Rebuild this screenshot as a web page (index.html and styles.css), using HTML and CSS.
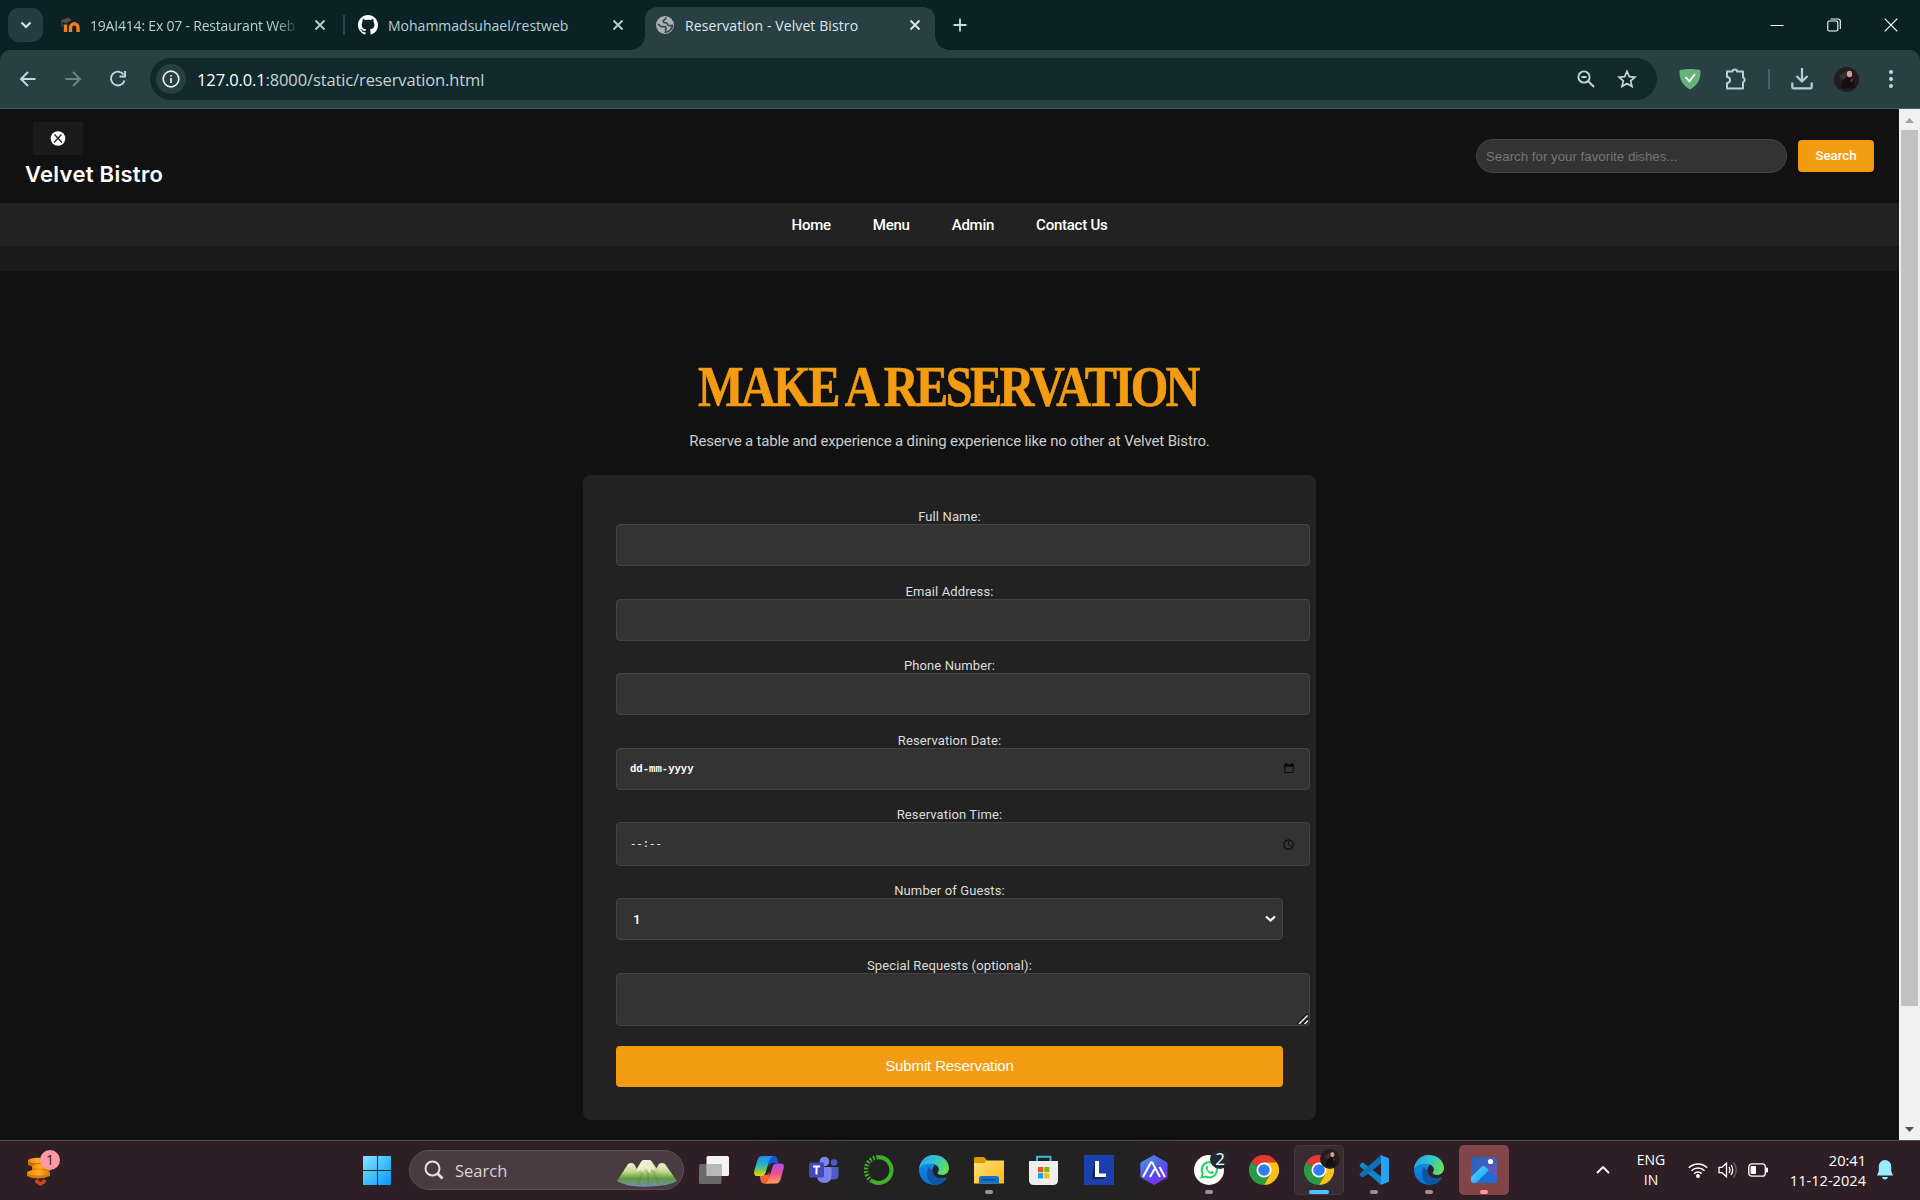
FILE: index.html
```html
<!DOCTYPE html>
<html lang="en">
<head>
<meta charset="utf-8">
<title>Reservation - Velvet Bistro</title>
<link rel="stylesheet" href="styles.css">
</head>
<body>
<svg class="defs" width="0" height="0">
  <defs>
    <linearGradient id="win" x1="0" y1="0" x2="1" y2="1"><stop offset="0" stop-color="#8be0ff"/><stop offset=".5" stop-color="#3ec3fb"/><stop offset="1" stop-color="#0b93f8"/></linearGradient>
    <linearGradient id="hill" x1="0" y1="0" x2="0" y2="1"><stop offset="0" stop-color="#f4f3dc"/><stop offset=".4" stop-color="#c3d68c"/><stop offset=".7" stop-color="#5d9a3b"/><stop offset="1" stop-color="#7790c0"/></linearGradient>
    <linearGradient id="cpa" x1="0" y1="0" x2="0" y2="1"><stop offset="0" stop-color="#1c8df0"/><stop offset=".45" stop-color="#27b5c4"/><stop offset=".75" stop-color="#86c94a"/><stop offset="1" stop-color="#f5d30b"/></linearGradient>
    <linearGradient id="cpb" x1="0" y1="0" x2="0" y2="1"><stop offset="0" stop-color="#a94df0"/><stop offset=".5" stop-color="#ef4f8f"/><stop offset="1" stop-color="#ffa05a"/></linearGradient>
    <linearGradient id="edgeTop" x1="0" y1=".3" x2="1" y2=".6"><stop offset="0" stop-color="#2aa5e8"/><stop offset=".5" stop-color="#2fc6cf"/><stop offset="1" stop-color="#6be04f"/></linearGradient>
    <linearGradient id="edgeLow" x1="0" y1="0" x2="0" y2="1"><stop offset="0" stop-color="#1592e6"/><stop offset="1" stop-color="#0b6fd0"/></linearGradient>
    <linearGradient id="fold" x1="0" y1="0" x2="1" y2="1"><stop offset="0" stop-color="#ffe07c"/><stop offset="1" stop-color="#fcb814"/></linearGradient>
    <linearGradient id="hex" x1="0" y1="0" x2=".6" y2="1"><stop offset="0" stop-color="#4aa3ea"/><stop offset=".55" stop-color="#5058e8"/><stop offset="1" stop-color="#7a2df0"/></linearGradient>
    <linearGradient id="pic" x1="0" y1="0" x2="1" y2="1"><stop offset="0" stop-color="#1668c6"/><stop offset="1" stop-color="#8050a8"/></linearGradient>
    <linearGradient id="pic2" x1="0" y1="0" x2="1" y2="1"><stop offset="0" stop-color="#55dcff"/><stop offset="1" stop-color="#1598e8"/></linearGradient>
    <linearGradient id="coin" x1="0" y1="0" x2="1" y2="0"><stop offset="0" stop-color="#ef8a12"/><stop offset=".5" stop-color="#ffae22"/><stop offset="1" stop-color="#d97506"/></linearGradient>
    <symbol id="close" viewBox="0 0 12 12"><path d="M1.5 1.5l9 9M10.5 1.5l-9 9" fill="none" stroke="currentColor" stroke-width="1.8"/></symbol>
    <symbol id="edge" viewBox="0 0 30 30">
      <path d="M15 0a15 15 0 0 0-15 15a15 15 0 0 0 15 15c5 0 9-2 12.300-6.200c.3-.8-.3-1.300-1-1c-6 2.200-13-.6-13-7.300c0-2 .8-3.500 2-4.500z" fill="url(#edgeLow)"/>
      <path d="M9.500 12c-3 6.500-1.500 14 5.500 18c5 0 9.500-2.500 12.500-6.500c.3-.8-.4-1.200-1-1c-6 2.200-13.200-.6-13.200-7z" fill="#0e55a4"/>
      <path d="M0 14.500C.5 6 7 0 15 0c8.500 0 15 6 15 13c0 4.500-3.500 7-7 7c-3.500 0-5.200-1.400-4-2.900c2.500-3.300-.5-7.600-5.500-8.300C7.500 8 1.500 10 0 14.500z" fill="url(#edgeTop)"/>
    </symbol>
    <symbol id="chrome" viewBox="0 0 30 30">
      <path d="M15 15L2 7.500A15 15 0 0 1 28 7.500z" fill="#e33b2e"/>
      <path d="M15 15l6.500 3.750L15 30A15 15 0 0 1 2 7.500z" fill="#2a9a47"/>
      <path d="M15 7.500h13A15 15 0 0 1 15 30l6.500-11.250z" fill="#fbc116"/>
      <circle cx="15" cy="15" r="7.500" fill="#fff"/><circle cx="15" cy="15" r="5.800" fill="#2f7cf0"/>
    </symbol>
    <symbol id="portrait" viewBox="0 0 25 25">
      <circle cx="12.500" cy="12.500" r="12.500" fill="#241c1d"/>
      <path d="M7 22l2-9 4-4 6 3 2 9z" fill="#121012"/><path d="M5 9l8-5 1 5-5 4z" fill="#3a3033"/>
      <ellipse cx="15.500" cy="7" rx="2.600" ry="3.200" fill="#d0a28e"/><path d="M16 13l3-2-1 5z" fill="#992018"/>
    </symbol>
  </defs>
</svg>

<header class="browser">
  <div class="tabstrip">
    <div class="tabsearch"><svg width="12" height="12" viewBox="0 0 12 12"><path d="M1.500 3.500L6 8l4.500-4.500" fill="none" stroke="#dbe6e8" stroke-width="2"/></svg></div>
    <div class="tab tab-first">
      <svg class="favicon" width="20" height="20" viewBox="0 0 20 20"><path d="M4.500 17V9.500M9.500 17v-4.500a3.600 3.600 0 0 1 7.500 0V17" fill="none" stroke="#ef7f1a" stroke-width="3.400"/><path d="M0 6l7-3 3 2-5 3zM1 6v6" fill="#55504d" stroke="#55504d"/></svg>
      <span class="tab-title faded t1">19AI414: Ex 07 - Restaurant Web</span>
      <svg class="x" width="12" height="12"><use href="#close"/></svg>
    </div>
    <i class="tab-sep"></i>
    <div class="tab tab-second">
      <svg class="favicon" width="20" height="20" viewBox="0 0 16 16"><path fill="#fff" d="M8 0C3.580 0 0 3.580 0 8c0 3.540 2.290 6.530 5.470 7.590.4.070.55-.17.55-.38 0-.19-.01-.82-.01-1.490-2.010.37-2.530-.49-2.690-.94-.09-.23-.48-.94-.82-1.130-.28-.15-.68-.52-.01-.53.63-.01 1.080.58 1.230.82.72 1.210 1.870.87 2.330.66.07-.52.28-.87.51-1.070-1.780-.2-3.640-.89-3.640-3.950 0-.87.31-1.590.82-2.150-.08-.2-.36-1.020.08-2.120 0 0 .67-.21 2.200.82.64-.18 1.320-.27 2-.27s1.360.09 2 .27c1.530-1.040 2.200-.82 2.200-.82.44 1.100.16 1.920.08 2.120.51.56.82 1.270.82 2.150 0 3.070-1.870 3.750-3.650 3.950.29.25.54.73.54 1.480 0 1.070-.01 1.930-.01 2.200 0 .21.15.46.55.38A8.010 8.010 0 0 0 16 8c0-4.420-3.580-8-8-8z"/></svg>
      <span class="tab-title t2">Mohammadsuhael/restweb</span>
      <svg class="x" width="12" height="12"><use href="#close"/></svg>
    </div>
    <div class="tab tab-active">
      <svg class="favicon" width="18" height="18" viewBox="0 0 18 18"><circle cx="9" cy="9" r="9" fill="#a9b0b8"/><path d="M10.500 1.800C9 2 9.500 3.800 8.200 4.200C6.800 4.500 7 6 8 6.500c1.500.5 3.500 0 3.500 2c0 1.200 1.500 1 2.500 1.200c1.200.2 2 .3 2.300-1c.2 3.700-2.600 7.300-6.800 7.500c.5-1.700-.5-2.200.3-3.200c.8-1-.2-2.300-1.600-2.300H5.500C4 10.700 4 8.500 1.700 8.300" fill="none" stroke="#35484e" stroke-width="1.700"/></svg>
      <span class="tab-title t3">Reservation - Velvet Bistro</span>
      <svg class="x" width="12" height="12"><use href="#close"/></svg>
    </div>
    <svg class="newtab" width="14" height="14" viewBox="0 0 14 14"><path d="M7 .5v13M.5 7h13" stroke="#c5dade" stroke-width="1.800"/></svg>
    <div class="wincontrols">
      <svg width="14" height="14" viewBox="0 0 14 14"><path d="M.5 7.500h13" stroke="#fff"/></svg>
      <svg width="14" height="14" viewBox="0 0 14 14" fill="none" stroke="#fff" stroke-width="1.100"><rect x=".8" y="3" width="10" height="10" rx="1.500"/><path d="M3.500 1h7.500a2.300 2.300 0 0 1 2.300 2.300V11"/></svg>
      <svg width="14" height="14" viewBox="0 0 14 14"><path d="M.7.700l12.600 12.600M13.300.700L.7 13.300" stroke="#fff" stroke-width="1.200"/></svg>
    </div>
  </div>
  <div class="toolbar">
    <svg class="nav-ic" width="20" height="20" viewBox="0 0 20 20" fill="none" stroke="#c3d9df" stroke-width="1.900"><path d="M17.500 10H3.500M10 3l-7 7 7 7"/></svg>
    <svg class="nav-ic" width="20" height="20" viewBox="0 0 20 20" fill="none" stroke="#6d8488" stroke-width="1.900"><path d="M2.500 10h14M10 3l7 7-7 7"/></svg>
    <svg class="nav-ic" width="20" height="20" viewBox="0 0 20 20" fill="none" stroke="#c3d9df" stroke-width="1.900"><path d="M16.500 11.500A6.900 6.900 0 1 1 15.500 5.500M17 2v5.500h-5.500"/></svg>
    <div class="omnibox">
      <div class="info"><svg width="18" height="18" viewBox="0 0 18 18" fill="none" stroke="#e8eef0" stroke-width="1.700"><circle cx="9" cy="9" r="7.800"/><path d="M9 8v5M9 5v1.600"/></svg></div>
      <span class="url"><b>127.0.0.1</b>:8000/static/reservation.html</span>
      <svg class="zoom" width="18" height="18" viewBox="0 0 18 18" fill="none" stroke="#c9d3d5" stroke-width="1.900"><circle cx="7" cy="7" r="5.600"/><path d="M11 11l6 6M4.500 7h5"/></svg>
      <svg width="20" height="20" viewBox="0 0 20 20" fill="none" stroke="#c9d3d5" stroke-width="1.700"><path d="M10 2.300l2.300 5.300 5.700.5-4.300 3.800 1.300 5.700-5-3-5 3 1.300-5.700L2 8.100l5.700-.5z"/></svg>
    </div>
    <svg class="shield" width="22" height="22" viewBox="0 0 22 22"><path d="M.5 2.500C4 .5 18 .5 21.500 2.500c.3 9-3 15-10.500 19C3.500 17.500.2 11.500.5 2.500z" fill="#67b279"/><path d="M6.500 9l4 4.300L16 6" fill="none" stroke="#fff" stroke-width="1.800"/></svg>
    <svg class="puzzle" width="22" height="22" viewBox="0 0 22 22" fill="none" stroke="#b5d0d7" stroke-width="2" stroke-linejoin="round"><path d="M2 3.500h5.500a2.300 2 0 0 1 4.600 0H18v6a2.400 2.400 0 0 1 0 4.600V20.500H2V15a3 3 0 0 0 0-6z"/></svg>
    <i class="bar-sep"></i>
    <svg class="download" width="22" height="22" viewBox="0 0 22 22" fill="none" stroke="#b5d0d7" stroke-width="2.200"><path d="M11 0v13M5.500 8l5.500 5.500L16.500 8M1.300 14.500v4.800q0 1 1 1h17.400q1 0 1-1v-4.800"/></svg>
    <svg class="avatar" width="25" height="25"><use href="#portrait"/></svg>
    <svg width="6" height="20" viewBox="0 0 6 20" fill="#c3d9df"><circle cx="3" cy="3" r="2"/><circle cx="3" cy="10" r="2"/><circle cx="3" cy="17" r="2"/></svg>
  </div>
</header>

<div class="viewport">
  <div class="page">
    <div class="site-header">
      <div class="brand">
        <svg width="50" height="33" viewBox="0 0 50 33"><rect width="50" height="33" fill="#1a1a1a"/><circle cx="25" cy="16.500" r="7.300" fill="#fff"/><path d="M21.500 12.500l7.500 8M28.500 12.500l-7.500 8" stroke="#222" stroke-width="1.300"/></svg>
        <span class="brand-name">Velvet Bistro</span>
      </div>
      <div class="search">
        <div class="search-input"><span>Search for your favorite dishes...</span></div>
        <div class="search-btn"><span>Search</span></div>
      </div>
    </div>
    <nav class="site-nav"><a>Home</a><a>Menu</a><a>Admin</a><a>Contact Us</a></nav>
    <div class="strip"></div>
    <main class="main">
      <h1><span>MAKE A RESERVATION</span></h1>
      <p class="lead">Reserve a table and experience a dining experience like no other at Velvet Bistro.</p>
      <div class="card">
        <label>Full Name:</label>
        <div class="field"></div>
        <label>Email Address:</label>
        <div class="field email"></div>
        <label>Phone Number:</label>
        <div class="field"></div>
        <label>Reservation Date:</label>
        <div class="field mono"><span>dd-mm-yyyy</span>
          <svg class="cal" width="10" height="11" viewBox="0 0 10 11"><path d="M.8 2.500h8.400v7H.8z" fill="none" stroke="#0c0c0c" stroke-width="1.100"/><path d="M.2 1.200h9.600v2.200H.2zM1.500 0h1.500v2H1.500zM7 0h1.500v2H7z" fill="#050505"/></svg></div>
        <label>Reservation Time:</label>
        <div class="field mono time"><span>--:--</span>
          <svg width="11" height="11" viewBox="0 0 11 11" fill="none" stroke="#0c0c0c"><circle cx="5.500" cy="5.500" r="4.700" stroke-width="1.200"/><path d="M5.500 2.500v3l2 2"/></svg></div>
        <label>Number of Guests:</label>
        <div class="field select"><span>1</span>
          <svg width="11" height="8" viewBox="0 0 11 8"><path d="M1 1.500l4.500 4 4.500-4" fill="none" stroke="#fff" stroke-width="2.200"/></svg></div>
        <label>Special Requests (optional):</label>
        <div class="field area"><svg width="11" height="11" viewBox="0 0 11 11"><path d="M0 11L10 1M5.500 11L11 5.500" stroke="#111" stroke-width="1.500"/><path d="M2 11l8.500-8.500M7.500 11L11 7.500" stroke="#e8e8e8" stroke-width="1.500"/></svg></div>
        <div class="submit">Submit Reservation</div>
      </div>
    </main>
  </div>
  <div class="scrollbar">
    <svg width="9" height="5"><path d="M0 5L4.500 0 9 5z" fill="#a3a3a3"/></svg>
    <i class="thumb"></i>
    <svg width="9" height="5"><path d="M0 0l4.500 5L9 0z" fill="#505050"/></svg>
  </div>
</div>

<footer class="taskbar">
  <div class="widget">
    <svg width="34" height="40" viewBox="0 0 34 40">
      <path d="M1 11v5q7 4 17 1v-6z" fill="#c96a06"/><ellipse cx="11" cy="11.500" rx="10" ry="2.800" fill="url(#coin)"/>
      <path d="M5 17v4q8 4 18 1v-5z" fill="#d97807"/><ellipse cx="14" cy="17.500" rx="9" ry="2.500" fill="url(#coin)"/>
      <path d="M0 23v4q10 5 23 0v-4z" fill="#dd7a06"/><ellipse cx="11.500" cy="23.500" rx="11.500" ry="3" fill="url(#coin)"/>
      <path d="M8 31.500l2.500-1.500 3 3 3-3 2.500 1.500v2L13.500 37 8 33.500z" fill="#cc4716"/>
    </svg>
    <span class="badge">1</span>
  </div>
  <svg class="start" width="30" height="30" viewBox="0 0 30 30" fill="url(#win)"><path d="M1.500 1H15v14H1v-13.500zM16 1h12.500l.500.500V15H16zM1 16h14v14H1.500L1 29.500zM16 16h13v13.500l-.5.500H16z"/></svg>
  <div class="task-search">
    <svg width="20" height="20" viewBox="0 0 20 20" fill="none" stroke="#e6e1e3" stroke-width="2"><circle cx="8.500" cy="8.500" r="7"/><path d="M13.500 13.500l5 5" stroke-width="2.600"/></svg>
    <span>Search</span>
    <svg class="hills" width="60" height="28" viewBox="0 0 60 28">
      <path d="M0 22L11 5q3-2 6 0l12 20Q12 29 0 22z" fill="url(#hill)"/><path d="M60 22L48 5q-3-2-6 0L30 25q18 4 30-3z" fill="url(#hill)"/>
      <path d="M9 26L24 3l2-2h7l2 2 16 22q-20 5-42 1z" fill="url(#hill)"/>
      <path d="M29 2l-8 24M31 2v25M33 4l9 22" stroke="#55745a" stroke-width="2" opacity=".3"/>
      <path d="M24 3l2-2h7l2 2 3 9-4-2-2 4-3-5-4 5-1-4-5 4z" fill="#f5f2dc" opacity=".8"/>
    </svg>
  </div>
  <div class="apps">
    <div class="app"><svg width="30" height="30" viewBox="0 0 30 30"><rect x="7.500" y="1" width="22.500" height="20" rx="1.500" fill="#f4f4f4"/><rect x="0" y="9" width="22.500" height="20" rx="1.500" fill="#777" opacity=".85"/><rect x="7.500" y="9" width="15" height="12" fill="#b9b9b9"/></svg></div>
    <div class="app"><svg width="30" height="30" viewBox="0 0 30 30"><path d="M14 1h6q2.500 0 3.300 2.500L24.500 8H19q-3 0-4 4z" fill="#1a55d8"/><path d="M16 28.500H10q-2.500 0-3.300-2.500L5.500 20H12q2.500 0 3.500-3z" fill="#f2603a"/><path d="M8 1h11.500Q16 2 14.500 8L11.500 18q-.8 3-4 3H3.500Q-1 21 .5 15L3.500 5Q4.700 1 8 1z" fill="url(#cpa)"/><path d="M22 28.500H10.500Q14 27.500 15.500 22l3-10q.8-3.500 4-3.500h4Q31 8.500 29.500 14l-3 10.500q-1.200 4-4.500 4z" fill="url(#cpb)"/></svg></div>
    <div class="app"><svg width="30" height="30" viewBox="0 0 30 30"><circle cx="25" cy="7.500" r="3.300" fill="#5059c9"/><path d="M20 12h9.500V20q0 4.500-4.500 4.500H20z" fill="#5059c9"/><circle cx="15.500" cy="6.500" r="4.800" fill="#7b83eb"/><path d="M8 12h14.500v8.500q0 7.500-7.200 7.500T8 20.500z" fill="#7b83eb"/><rect y="7.500" width="15" height="15" rx="1.500" fill="#4449b8"/><path d="M4 11.500h7M7.500 11.500v8" stroke="#fff" stroke-width="2"/></svg></div>
    <div class="app"><svg width="30" height="30" viewBox="0 0 30 30" fill="none" stroke="#43b02a"><path d="M14 2.300A12.800 12.800 0 1 1 8 26" stroke-width="4"/><path d="M8 26A12.800 12.800 0 0 1 14 2.300" stroke-width="4.500" stroke-dasharray="1.800 1.600"/><path d="M9 24A11 11 0 0 1 13 4" stroke="#222" stroke-width="1" stroke-dasharray="2 2"/></svg></div>
    <div class="app"><svg width="30" height="30"><use href="#edge"/></svg></div>
    <div class="app run"><svg width="30" height="30" viewBox="0 0 30 30"><path d="M0 10V3.500Q0 2 1.500 2H9q1 0 2 1l2 2.500V10z" fill="#d99a04"/><path d="M0 8h10l2.500-2.500H30V28.500H0z" fill="url(#fold)"/><path d="M5 28.500V23.500q0-2.500 2.500-2.500h15q2.500 0 2.500 2.500v5z" fill="#0f73cf"/><path d="M8.500 24.800h13" stroke="#0a4b93" stroke-width="1.400"/></svg></div>
    <div class="app"><svg width="30" height="30" viewBox="0 0 30 30"><path d="M8 7V2q0-.3.300-.3h12.900q.3 0 .3.300v5" fill="none" stroke="#35bdf0" stroke-width="2"/><path d="M0 6h29v19q0 5-5 5H5q-5 0-5-5z" fill="#eeeeee"/><path fill="#f25022" d="M9 12h5.200v5.200H9z"/><path fill="#7fba00" d="M15.200 12h5.200v5.200h-5.200z"/><path fill="#00a4ef" d="M9 18.200h5.200v5.200H9z"/><path fill="#ffb900" d="M15.200 18.200h5.200v5.200h-5.200z"/></svg></div>
    <div class="app"><svg width="30" height="30" viewBox="0 0 30 30"><rect width="30" height="30" fill="#1c3fae"/><path d="M8 20l3-14v16h10l-2 2H8z" fill="#0b2a52"/><path d="M11 6h4v12.500h7V22H11z" fill="#fff"/></svg></div>
    <div class="app"><svg width="30" height="30" viewBox="0 0 30 30"><path d="M15 0l12.500 7q1 .6 1 2v12q0 1.400-1 2L15 30 2.300 23q-1-.6-1-2V9q0-1.400 1-2z" fill="url(#hex)"/><path d="M4 22L11.500 8q1-1.500 2 0L21 22M11 22l4.500-8M20.500 12L26 22" fill="none" stroke="#fff" stroke-width="2"/></svg></div>
    <div class="app run"><svg width="30" height="30" viewBox="0 0 30 30"><circle cx="15" cy="15" r="15" fill="#fff"/><path d="M7.500 22.500l1.200-4A7.600 7.600 0 1 1 11.800 21.500z" fill="none" stroke="#25d366" stroke-width="2"/><path d="M12 11q1-1 1.500 0l.8 1.700-.8 1.300q1 2 3 3l1.300-1 2 1q.5.500-.4 1.500-2.400 1.500-5.400-1.300T12 11z" fill="#25d366"/></svg><span class="count">2</span></div>
    <div class="app"><svg width="30" height="30"><use href="#chrome"/></svg></div>
    <div class="app run active"><svg width="30" height="30"><use href="#chrome"/></svg><svg class="mini" width="20" height="20"><use href="#portrait"/></svg></div>
    <div class="app run"><svg width="30" height="30" viewBox="0 0 30 30"><path d="M22 0v30L1 11.500Q0 10.500 1 9.500L2.500 8q1-.8 2 0L22 21.500z" fill="#0f86d0"/><path d="M22 0L1 18.500q-1 1 0 2L2.500 22q1 .8 2 0L22 8.500z" fill="#0b70b8"/><path d="M22 0l8 3.500v23L22 30z" fill="#27a3f2"/></svg></div>
    <div class="app run"><svg width="30" height="30"><use href="#edge"/></svg></div>
    <div class="app run photos"><svg width="30" height="30" viewBox="0 0 30 30"><rect x="2" y="2" width="26" height="26" rx="2.500" fill="url(#pic)"/><path d="M2 22l10.500-10q2-2 4 0L28 23v2.500Q28 28 25.500 28h-21Q2 28 2 25.500z" fill="#1c6fd0"/><path d="M2 22l10.500-10q2-2 4 0l3.500 3L7 28H4.500Q2 28 2 25.500z" fill="url(#pic2)"/><circle cx="21.500" cy="6.500" r="2.600" fill="#fff"/></svg></div>
  </div>
  <div class="tray">
    <svg class="up" width="14" height="8" viewBox="0 0 14 8"><path d="M1 7l6-6 6 6" fill="none" stroke="#fff" stroke-width="1.800"/></svg>
    <div class="lang"><span>ENG</span><span>IN</span></div>
    <svg class="wifi" width="20" height="16" viewBox="0 0 20 16" fill="none" stroke="#fff" stroke-width="1.500"><path d="M.8 5.800a13 13 0 0 1 18.400 0M3.500 8.800a9.200 9.200 0 0 1 13 0M6.300 11.600a5.200 5.200 0 0 1 7.400 0"/><circle cx="10" cy="14" r="1.200" fill="#fff"/></svg>
    <svg class="sound" width="20" height="18" viewBox="0 0 20 18" fill="none" stroke="#fff" stroke-width="1.300"><path d="M1 6.300h3l4.500-4v13.400l-4.500-4H1zM11 6q2 3 0 6M13 4q3.500 5 0 10"/><path d="M15.500 1.500q5.500 7.500 0 15" stroke="#6b6065"/></svg>
    <svg class="battery" width="20" height="14" viewBox="0 0 20 14"><rect x=".8" y=".8" width="16.500" height="12.400" rx="3" fill="none" stroke="#fff" stroke-width="1.300"/><rect x="2.500" y="3" width="5.500" height="8" rx="1" fill="#fff"/><path d="M18 4.500h1q1 0 1 1v3q0 1-1 1h-1z" fill="#fff"/></svg>
    <div class="clock"><span>20:41</span><span class="date">11-12-2024</span></div>
    <svg class="bell" width="16" height="20" viewBox="0 0 16 20" fill="#99ebff"><path d="M8 0a6.200 6.200 0 0 0-6.200 6.500V11L0 15.500h16L14.200 11V6.500A6.200 6.200 0 0 0 8 0zM5 17h6q-.7 2.500-3 2.500T5 17z"/></svg>
  </div>
</footer>
</body>
</html>
```
FILE: styles.css
```css
* { box-sizing: border-box; }
body { margin: 0; width: 1920px; height: 1200px; overflow: hidden; background: #111; display: flex; flex-direction: column; font-family: Roboto, sans-serif; color: #fff; }
svg { display: block; flex: none; }
.defs { position: absolute; }
span { white-space: nowrap; }

.browser { height: 109px; flex: none; background: #0a2226; font-family: "Open Sans", "Noto Sans", sans-serif; }
.tabstrip { height: 50px; display: flex; align-items: center; padding-left: 8px; }
.tabsearch { width: 35px; height: 34px; border-radius: 11px; background: #243d42; display: grid; place-items: center; }
.tab { display: flex; align-items: center; height: 43px; color: #b9d0d3; }
.tab-first { width: 300px; padding: 0 17px 0 18px; }
.tab-sep { width: 2px; height: 20px; background: #29464b; }
.tab-second { width: 300px; padding: 0 21px 0 13px; }
.tab-title { margin-left: 10px; padding-top: 1px; font-size: 14px; flex: 1; overflow: hidden; line-height: 20px; }
.faded { flex: none; width: 216px; margin-left: 9px; -webkit-mask-image: linear-gradient(90deg, #000 86%, transparent 97%); mask-image: linear-gradient(90deg, #000 86%, transparent 97%); }
.tab-first .x { margin-left: auto; }
.t1 { letter-spacing: -.2px; }
.t2 { letter-spacing: 0; }
.t3 { letter-spacing: .1px; margin-left: 11px; }
.tab-active { position: relative; width: 290px; height: 43px; margin-top: 7px; padding: 0 14px 7px 11px; background: #283f43; border-radius: 12px 12px 0 0; color: #dfe9ea; }
.tab-active::before, .tab-active::after { content: ""; position: absolute; bottom: 0; width: 14px; height: 14px; }
.tab-active::before { left: -14px; background: radial-gradient(circle at 0 0, transparent 13.500px, #283f43 14px); }
.tab-active::after { right: -14px; background: radial-gradient(circle at 100% 0, transparent 13.500px, #283f43 14px); }
.newtab { margin-left: 18px; }
.wincontrols { margin-left: auto; display: flex; gap: 43px; padding-right: 22px; }

.toolbar { height: 59px; background: #283f43; border-bottom: 1px solid #4b5a5d; border-radius: 10px 10px 0 0; display: flex; align-items: center; padding-left: 18px; }
.nav-ic { margin-right: 25px; }
.nav-ic:nth-child(3) { margin-right: 22px; }
.omnibox { width: 1507px; height: 42px; border-radius: 21px; background: #10292d; display: flex; align-items: center; padding: 0 20px 0 6px; }
.info { width: 30px; height: 30px; border-radius: 50%; background: #283f43; display: grid; place-items: center; }
.url { margin-left: 11px; font-size: 16.500px; letter-spacing: -.12px; color: #c8d2d4; flex: 1; }
.url b { font-weight: 400; color: #fff; }
.zoom { margin-right: 22px; }
.shield { margin-left: 22px; }
.puzzle { margin-left: 24px; }
.bar-sep { width: 2px; height: 20px; margin-left: 21px; background: #48646a; }
.download { margin-left: 21px; }
.avatar { margin: 0 29px 0 21px; }

.viewport { height: 1031px; flex: none; display: flex; overflow: hidden; }
.page { width: 1899px; flex: none; }
.site-header { height: 94px; display: flex; justify-content: space-between; padding: 13px 25px 0; }
.brand svg { margin-left: 8px; }
.brand-name { display: block; margin-top: 4px; font: 600 22px/30px Inter, sans-serif; letter-spacing: .3px; }
.search { display: flex; align-items: center; gap: 11px; height: 34px; margin-top: 17px; }
.search-input { width: 311px; height: 34px; border: 1px solid #444; border-radius: 17px; background: #333; color: #757575; font: 13.300px/34px "Liberation Sans", sans-serif; padding-left: 9px; }
.search-btn { width: 76px; height: 32px; border-radius: 4px; background: #f39c12; font: 500 13.300px/32px Roboto, sans-serif; text-align: center; }
.site-nav { height: 43px; background: #222; display: flex; justify-content: center; gap: 42px; font: 500 15px/44px Roboto, sans-serif; letter-spacing: -.25px; }
.strip { height: 25px; background: #1a1a1a; }
.main { display: flex; flex-direction: column; align-items: center; padding-top: 86px; }
h1 { margin: 0; height: 60px; font: 700 56px/60px "Liberation Serif", serif; color: #f39c12; }
h1 span { display: inline-block; margin-left: -4px; letter-spacing: -3px; transform: scaleX(.862); -webkit-text-stroke: .7px #f39c12; }
.lead { margin: 13px 0 0; height: 45px; font-size: 15px; line-height: 22px; letter-spacing: -.155px; color: #ccc; }

.card { width: 733px; height: 645px; border-radius: 8px; background: #222; padding: 33px; display: flex; flex-direction: column; }
.card label { height: 16px; text-align: center; font-size: 13px; line-height: 18px; letter-spacing: .12px; color: #ddd; }
.field { width: 694px; height: 42px; margin-bottom: 17px; flex: none; border: 1px solid #444; border-radius: 4px; background: #333; display: flex; align-items: center; justify-content: space-between; padding: 0 15px 0 13px; }
.field.email { margin-bottom: 16px; }
.field.mono { font: 700 10.600px "Liberation Mono", monospace; margin-bottom: 16px; }
.field.time { height: 44px; margin-bottom: 16px; font-weight: 400; }
.cal { margin-bottom: 2px; }
.field.select { width: 667px; font: 500 13.500px Roboto, sans-serif; padding: 0 6px 0 16px; }
.field.area { height: 53px; margin-bottom: 20px; align-items: flex-end; justify-content: flex-end; padding: 0 1px 1px 0; }
.submit { height: 41px; border-radius: 4px; background: #f39c12; font: 15px/40px "Liberation Sans", sans-serif; letter-spacing: -.13px; text-align: center; }

.scrollbar { width: 21px; background: #f1f1f1; display: flex; flex-direction: column; align-items: center; padding: 9px 0 8px; }
.thumb { width: 17px; height: 876px; margin: 7px 0 auto; background: #c1c1c1; }

.taskbar { height: 60px; flex: none; border-top: 1px solid #524a4e; background: linear-gradient(90deg, #2e1e25 0, #2e1e25 720px, #232223 850px, #232223 1130px, #2e1e25 1210px, #2e1e25 100%); display: flex; align-items: center; padding-bottom: 1px; font-family: "Open Sans", "Noto Sans", sans-serif; }
.widget { position: relative; width: 334px; padding-left: 27px; }
.widget > svg { margin-top: -3px; }
.badge { position: absolute; left: 40px; top: -2px; width: 20px; height: 20px; border-radius: 50%; background: #ff99a4; color: #302024; font-size: 14px; line-height: 20px; text-align: center; }
.start { margin-left: 28px; }
.task-search { width: 275px; height: 40px; margin-left: 17px; border-radius: 20px; border: 1px solid #5c5054; background: #493b40; display: flex; align-items: center; padding: 0 6px 0 14px; color: #dcd5d7; font-size: 16.500px; }
.task-search span { margin-left: 11px; flex: 1; }
.hills { margin-top: 6px; }
.apps { display: flex; margin-left: 5px; gap: 5px; }
.app { position: relative; width: 50px; height: 50px; border-radius: 5px; display: grid; place-items: center; }
.run::after { content: ""; position: absolute; left: 21px; bottom: 1px; width: 8px; height: 4px; border-radius: 2px; background: #999398; }
.active { background: #3a2b32; border: 1px solid #46383e; }
.active::after { left: 14px; bottom: 0; width: 20px; background: #4cc2ff; }
.photos { background: #82454a; }
.photos::after { background: #ff99a4; }
.count { position: absolute; right: 4px; top: 4px; width: 20px; height: 20px; border-radius: 50%; background: #202a30; font-size: 17px; line-height: 19px; text-align: center; }
.mini { position: absolute; right: 3px; top: 3px; }
.tray { display: flex; align-items: center; margin-left: auto; padding-right: 27px; font-size: 14px; line-height: 20px; }
.up { margin-right: 26px; }
.lang, .clock { display: flex; flex-direction: column; align-items: center; }
.lang { width: 30px; }
.wifi { margin-left: 22px; }
.sound { margin-left: 10px; }
.battery { margin-left: 10px; }
.clock { align-items: flex-end; width: 98px; font-size: 14.600px; }
.bell { margin-left: 11px; }
```
